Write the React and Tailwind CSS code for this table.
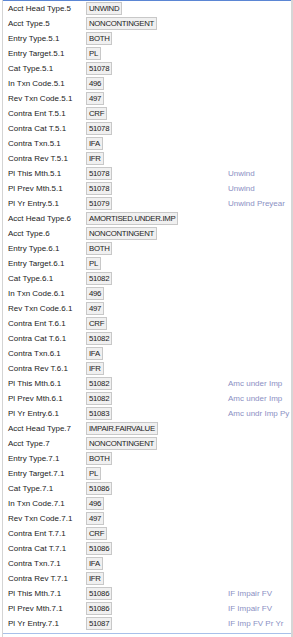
import React from "react";

const sections = [
  {
    n: "5",
    head: "UNWIND",
    cat: "51078",
    yrCat: "51079",
    notes: ["Unwind", "Unwind", "Unwind Preyear"],
  },
  {
    n: "6",
    head: "AMORTISED.UNDER.IMP",
    cat: "51082",
    yrCat: "51083",
    notes: ["Amc under Imp", "Amc under Imp", "Amc undr Imp Py"],
  },
  {
    n: "7",
    head: "IMPAIR.FAIRVALUE",
    cat: "51086",
    yrCat: "51087",
    notes: ["IF Impair FV", "IF Impair FV", "IF Imp FV Pr Yr"],
  },
];

const buildRows = (s) => {
  const m = `${s.n}.1`;
  return [
    { label: `Acct Head Type.${s.n}`, value: s.head },
    { label: `Acct Type.${s.n}`, value: "NONCONTINGENT" },
    { label: `Entry Type.${m}`, value: "BOTH" },
    { label: `Entry Target.${m}`, value: "PL" },
    { label: `Cat Type.${m}`, value: s.cat },
    { label: `In Txn Code.${m}`, value: "496" },
    { label: `Rev Txn Code.${m}`, value: "497" },
    { label: `Contra Ent T.${m}`, value: "CRF" },
    { label: `Contra Cat T.${m}`, value: s.cat },
    { label: `Contra Txn.${m}`, value: "IFA" },
    { label: `Contra Rev T.${m}`, value: "IFR" },
    { label: `Pl This Mth.${m}`, value: s.cat, note: s.notes[0] },
    { label: `Pl Prev Mth.${m}`, value: s.cat, note: s.notes[1] },
    { label: `Pl Yr Entry.${m}`, value: s.yrCat, note: s.notes[2] },
  ];
};

const Row = ({ label, value, note }) => (
  <div className="flex h-[15px] items-center leading-[13px]">
    <div className="w-[83px] shrink-0 whitespace-nowrap pl-[5px] text-[8px] text-[#222]">
      {label}
    </div>
    <div className="flex w-[142px] shrink-0 items-center">
      <span className="block h-[13px] border border-[#c8c8c8] bg-[#f0f0f0] px-[2px] text-[7.8px] leading-[11px] tracking-[-0.3px] text-[#222]">
        {value}
      </span>
    </div>
    {note && (
      <div className="whitespace-nowrap text-[8px] text-[#8b90c4]">{note}</div>
    )}
  </div>
);

export default function App() {
  const rows = sections.flatMap(buildRows);

  return (
    <div className="flex h-[637px] w-[293px] overflow-hidden bg-white font-['Liberation_Sans',Arial,sans-serif]">
      <div className="ml-[2px] min-w-0 flex-1 border-l border-[#d4d4d4]">
        <div className="border-t border-[#5b86d4]">
          {rows.map((r, i) => (
            <Row key={i} {...r} />
          ))}
        </div>
        <div className="mt-[2px] border-t border-[#a8c0ea]" />
      </div>
      <div className="w-[2px] shrink-0 bg-[#d6d6d6]" />
    </div>
  );
}
